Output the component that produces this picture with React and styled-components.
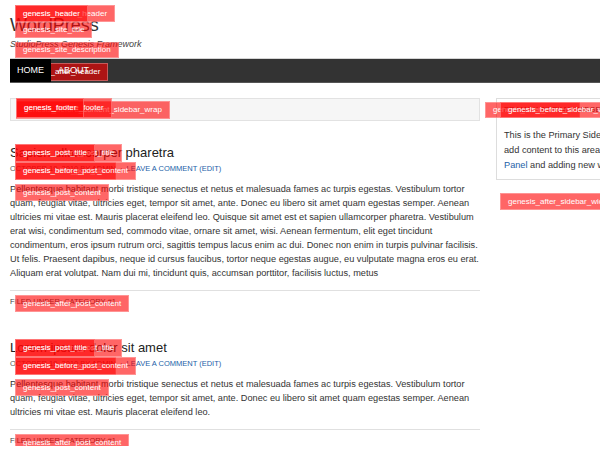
import React from "react";
import styled, { createGlobalStyle } from "styled-components";

const GlobalStyle = createGlobalStyle`
    html, body {
        margin: 0;
        overflow: hidden;
        background: #fff;
    }
    body {
        font-family: "Liberation Sans", Arial, sans-serif;
        color: #333;
    }
`

const Page = styled.div`
    width: 800px;
    padding-left: 10px;
`

// red hook markers laid over the page
const Hook = styled.span`
    position: absolute;
    top: ${p => p.$top}px;
    left: ${p => p.$left ?? 5}px;
    z-index: ${p => p.$z ?? 2};
    height: ${p => p.$h ?? 18}px;
    box-sizing: border-box;
    padding: 0 7px;
    border: 1px solid rgba(255, 255, 255, 0.3);
    background: rgba(255, 0, 0, 0.6);
    color: #fff;
    font-family: "Liberation Sans", Arial, sans-serif;
    font-size: 8px;
    font-style: normal;
    font-weight: normal;
    text-transform: none;
    line-height: ${p => (p.$h ?? 18) - 2}px;
    white-space: nowrap;
`

const Header = styled.header`
    position: relative;
    padding: 14px 0 8px;
`
const SiteTitle = styled.h1`
    margin: 0;
    font-size: 18px;
    line-height: 22px;
    font-weight: normal;
    color: #333;
`
const SiteDescription = styled.p`
    margin: 2px 0 0;
    font-size: 9px;
    line-height: 12px;
    font-style: italic;
    color: #444;
`

const NavBar = styled.nav`
    position: relative;
    background: #333;
    border-top: 1px solid #d5d5d5;
    border-bottom: 1px solid #555;
`
const Menu = styled.ul`
    display: flex;
    margin: 0;
    padding: 0;
    list-style: none;
`
const MenuItem = styled.li`
    position: relative;
    z-index: 3;
    padding: 0 7px;
    background: ${p => (p.$current ? "#000" : "transparent")};
    color: #fff;
    font-size: 9px;
    line-height: 23px;
    text-transform: uppercase;
`

const Main = styled.div`
    display: flex;
    align-items: flex-start;
    gap: 16px;
    margin-top: 15px;
`
const Content = styled.main`
    width: 470px;
    flex: none;
`
const HookBar = styled.div`
    position: relative;
    height: 21px;
    background: #f6f6f6;
    border: 1px solid #e2e2e2;
`
const PostList = styled.div`
    display: flex;
    flex-direction: column;
    gap: 32px;
    padding-top: 23px;
`
const Post = styled.article`
    display: flex;
    flex-direction: column;
`
const PostTitle = styled.h2`
    position: relative;
    margin: 0;
    font-size: 13px;
    line-height: 17px;
    font-weight: normal;
    color: #222;
`
const PostInfo = styled.p`
    position: relative;
    margin: 3px 0 0;
    font-size: 7.5px;
    line-height: 10px;
    text-transform: uppercase;
    color: #555;
`
const Link = styled.a`
    color: #2361a8;
    text-decoration: none;
`
const Dot = styled.span`
    margin: 0 4px;
`
const PostBody = styled.p`
    position: relative;
    margin: 7.5px 0 0;
    font-size: 9.2px;
    line-height: 14px;
    color: #333;
`
const PostMeta = styled.div`
    position: relative;
    margin-top: 10.5px;
    padding-top: 6px;
    border-top: 1px solid #e0e0e0;
    font-size: 7.5px;
    line-height: 10px;
    text-transform: uppercase;
    color: #444;
`

const Sidebar = styled.aside`
    position: relative;
    width: 230px;
    flex: none;
`
const Widget = styled.section`
    border: 1px solid #ddd;
    padding: 4px 7px 6px;
`
const WidgetTitle = styled.h4`
    margin: 0 0 11px;
    font-size: 7.5px;
    line-height: 14px;
    font-weight: normal;
    text-transform: uppercase;
    color: #333;
`
const WidgetText = styled.p`
    margin: 0;
    font-size: 9.2px;
    line-height: 15px;
    color: #333;
`

const posts = [
    {
        title: "Sapien ullamcorper pharetra",
        body:
            "Pellentesque habitant morbi tristique senectus et netus et malesuada fames ac turpis egestas. Vestibulum tortor quam, feugiat vitae, ultricies eget, tempor sit amet, ante. Donec eu libero sit amet quam egestas semper. Aenean ultricies mi vitae est. Mauris placerat eleifend leo. Quisque sit amet est et sapien ullamcorper pharetra. Vestibulum erat wisi, condimentum sed, commodo vitae, ornare sit amet, wisi. Aenean fermentum, elit eget tincidunt condimentum, eros ipsum rutrum orci, sagittis tempus lacus enim ac dui. Donec non enim in turpis pulvinar facilisis. Ut felis. Praesent dapibus, neque id cursus faucibus, tortor neque egestas augue, eu vulputate magna eros eu erat. Aliquam erat volutpat. Nam dui mi, tincidunt quis, accumsan porttitor, facilisis luctus, metus",
    },
    {
        title: "Lorem ipsum dolor sit amet",
        body:
            "Pellentesque habitant morbi tristique senectus et netus et malesuada fames ac turpis egestas. Vestibulum tortor quam, feugiat vitae, ultricies eget, tempor sit amet, ante. Donec eu libero sit amet quam egestas semper. Aenean ultricies mi vitae est. Mauris placerat eleifend leo.",
    },
]

function PostEntry({ post }) {
    return (
        <Post>
            <PostTitle>
                {post.title}
                <Hook $top={0}>genesis_before_post_title</Hook>
                <Hook $top={0}>genesis_post_title</Hook>
            </PostTitle>
            <PostInfo>
                October 19, 2010 by admin<Dot>·</Dot>
                <Link href="#">Leave a Comment</Link> <Link href="#">(Edit)</Link>
                <Hook $top={-2}>genesis_after_post_title</Hook>
                <Hook $top={-2}>genesis_before_post_content</Hook>
            </PostInfo>
            <PostBody>
                {post.body}
                <Hook $top={2.5} $h={17}>genesis_post_content</Hook>
            </PostBody>
            <PostMeta>
                Filed Under: Category #1
                <Hook $top={4} $h={17}>genesis_after_post_content</Hook>
            </PostMeta>
        </Post>
    )
}

export default function App() {
    return (
        <Page>
            <GlobalStyle />
            <Header>
                <SiteTitle>WordPress</SiteTitle>
                <SiteDescription>StudioPress Genesis Framework</SiteDescription>
                <Hook $top={5} $h={17}>genesis_before_header</Hook>
                <Hook $top={5} $h={17}>genesis_header</Hook>
                <Hook $top={22} $h={16}>genesis_site_title</Hook>
                <Hook $top={42} $h={16}>genesis_site_description</Hook>
            </Header>
            <NavBar>
                <Menu>
                    <MenuItem $current>Home</MenuItem>
                    <MenuItem>About</MenuItem>
                </Menu>
                <Hook $top={4} $z={1}>genesis_after_header</Hook>
            </NavBar>
            <Main>
                <Content>
                    <HookBar>
                        <Hook $top={2} $h={18}>genesis_before_content_sidebar_wrap</Hook>
                        <Hook $top={-1} $h={20}>genesis_before_footer</Hook>
                        <Hook $top={-1} $h={20}>genesis_footer</Hook>
                    </HookBar>
                    <PostList>
                        {posts.map(post => (
                            <PostEntry key={post.title} post={post} />
                        ))}
                    </PostList>
                </Content>
                <Sidebar>
                    <Widget>
                        <WidgetTitle>Primary Sidebar Widget Area</WidgetTitle>
                        <WidgetText>
                            This is the Primary Sidebar Widget Area. You can<br />
                            add content to this area by visiting your <Link href="#">Widgets</Link><br />
                            <Link href="#">Panel</Link> and adding new widgets to this area.
                        </WidgetText>
                    </Widget>
                    <Hook $top={4} $left={-11} $h={16}>genesis_after_content</Hook>
                    <Hook $top={4} $left={4} $h={16}>genesis_before_sidebar_widget_area</Hook>
                    <Hook $top={95} $left={4} $h={17}>genesis_after_sidebar_widget_area</Hook>
                </Sidebar>
            </Main>
        </Page>
    )
}
